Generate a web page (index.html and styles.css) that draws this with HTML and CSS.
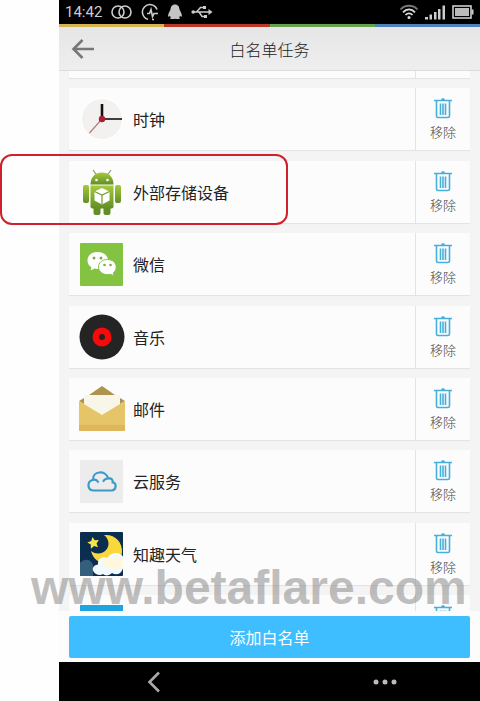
FILE: index.html
```
<!DOCTYPE html>
<html lang="zh-CN">
<head>
    <meta charset="UTF-8">
    <meta name="viewport" content="width=device-width, initial-scale=1.0">
    <title>白名单任务</title>
    <link rel="stylesheet" href="styles.css">
</head>
<body>
    <svg class="sprite" aria-hidden="true">
        <symbol id="trash" viewBox="0 0 20 22">
            <path d="M1 3.500h18M3.500 3.500v15.500q0 1.500 1.500 1.500h10q1.500 0 1.500-1.500V3.500M7.500 6.500v11.500M10 6.500v11.500M12.500 6.500v11.500" fill="none" stroke="#46b0da" stroke-width="1.600"/>
            <path d="M8 3.500q0-2.500 2-2.500t2 2.500z" fill="#46b0da"/>
        </symbol>
    </svg>

    <div class="phone">
        <!-- Status bar -->
        <div class="status-bar">
            <span class="time">14:42</span>
            <svg width="21" height="16" viewBox="0 0 21 16" fill="none" stroke="#ccc" stroke-width="1.600">
                <circle cx="7" cy="8" r="6"/><circle cx="14" cy="8" r="6"/>
            </svg>
            <svg width="18" height="18" viewBox="0 0 18 18" fill="none" stroke="#ccc" stroke-width="1.600">
                <path d="M7 16.300A7.500 7.500 0 1 1 16 6.500M6 10.500h2.500l1.500-4 1.500 7 1.500-3H17M11 16.500h2"/>
            </svg>
            <svg width="14" height="16" viewBox="0 0 14 16" fill="#c4c4c4">
                <path d="M7 .5C4 .5 2.500 3 2.500 5.500L1 8.500C-.3 11 0 13 .8 12.800L2 12l.8 1.500L2 15h4.500L7 14.500l.5.500H12l-.8-1.500L12 12l1.200.8c.8.200 1.100-1.800-.2-4.300L11.500 5.500C11.500 3 10 .5 7 .5z"/>
            </svg>
            <svg width="22" height="14" viewBox="0 0 22 14" fill="none" stroke="#ccc" stroke-width="1.500">
                <path d="M3 7h15M5.500 7l4-4.500h3M8 7l3 4.500h3"/>
                <circle cx="2.200" cy="7" r="1.800" fill="#ccc" stroke="none"/>
                <path d="M17.500 4v6L21.500 7z" fill="#ccc" stroke="none"/>
                <path d="M12 1h3v3h-3zM13 10h3v3h-3z" fill="#ccc" stroke="none"/>
            </svg>
            <div class="status-right">
                <svg width="20" height="16" viewBox="0 0 20 16" fill="none" stroke="#ddd" stroke-width="1.800">
                    <path d="M1.500 5.500C6 .5 14 .5 18.500 5.500" stroke="#777"/>
                    <path d="M4 8.300c3.500-3.800 8.500-3.800 12 0M6.500 11c2-2.200 5-2.200 7 0"/>
                    <circle cx="10" cy="13.500" r="1.500" fill="#ddd" stroke="none"/>
                </svg>
                <svg width="21" height="15" viewBox="0 0 21 15" fill="#ccc">
                    <path d="M0 12h3v2.500H0zM4.500 9.500h2.500v5H4.500zM9 7h2.500v7.500H9zM13 4h2.500v10.500H13zM17.500.5H20v14h-2.500z"/>
                </svg>
                <svg width="22" height="14" viewBox="0 0 22 14">
                    <rect x="1" y="1" width="18" height="12" fill="none" stroke="#ccc" stroke-width="1.600"/>
                    <path d="M3 3h14v8H3z" fill="#bbb"/><path d="M19.500 4.500h2v5h-2z" fill="#ccc"/>
                </svg>
            </div>
        </div>
        <div class="color-strip">
            <span class="yellow"></span><span class="red"></span><span class="green"></span><span class="blue"></span>
        </div>

        <!-- Header -->
        <header class="header">
            <button class="back" aria-label="返回">
                <svg width="24" height="22" viewBox="0 0 24 22" fill="none" stroke="#777" stroke-width="2.600">
                    <path d="M11.500 2L2.500 11l9 9M2.500 11H23"/>
                </svg>
            </button>
            <h1>白名单任务</h1>
        </header>

        <!-- Task list -->
        <main class="list-area">
            <ul class="task-list">
                <li class="task"><span class="task-info"></span><span class="remove"></span></li>
                <li class="task">
                    <div class="task-info">
                        <svg class="icon" viewBox="0 0 46 46">
                            <circle cx="23" cy="23" r="21" fill="#fff"/>
                            <circle cx="23" cy="23" r="20" fill="#f3f0f0"/>
                            <path d="M23 23L10.500 37" stroke="#b9797c" stroke-width="1.200"/>
                            <path d="M23 23V8" stroke="#111" stroke-width="2.600"/>
                            <path d="M23 23h20" stroke="#111" stroke-width="1.600"/>
                            <circle cx="23" cy="23" r="3.200" fill="#a91f31"/>
                        </svg>
                        <span>时钟</span>
                    </div>
                    <button class="remove"><svg><use href="#trash"/></svg>移除</button>
                </li>
                <li class="task">
                    <div class="task-info">
                        <svg class="icon" viewBox="0 0 46 46">
                            <defs>
                                <linearGradient id="droid" x2="0" y2="1"><stop stop-color="#a5ca3c"/><stop offset="1" stop-color="#628f24"/></linearGradient>
                            </defs>
                            <path d="M14 1l3.500 5M32 1l-3.500 5" stroke="#8a9d60" stroke-width="1.200"/>
                            <path d="M11.500 15.500C11.500 8 16 3.500 23 3.500S34.500 8 34.500 15.500z" fill="url(#droid)"/>
                            <circle cx="17.500" cy="11" r="1.300" fill="#fff"/><circle cx="28.500" cy="11" r="1.300" fill="#fff"/>
                            <rect x="4" y="16" width="6" height="18" rx="2" fill="url(#droid)"/>
                            <rect x="36" y="16" width="6" height="18" rx="2" fill="url(#droid)"/>
                            <rect x="14.500" y="33" width="7" height="13" rx="2" fill="#628f24"/>
                            <rect x="24.500" y="33" width="7" height="13" rx="2" fill="#628f24"/>
                            <path d="M11.500 16.500h23v21q0 2-2 2h-19q-2 0-2-2z" fill="url(#droid)"/>
                            <path d="M23 19l7.500 3.500v9L23 35.500l-7.500-4v-9z" fill="#fff"/>
                            <path d="M15.500 22.500L23 26l7.500-3.500M23 26v9.500" fill="none" stroke="#719b36" stroke-width="1.200"/>
                        </svg>
                        <span>外部存储设备</span>
                    </div>
                    <button class="remove"><svg><use href="#trash"/></svg>移除</button>
                </li>
                <li class="task">
                    <div class="task-info">
                        <svg class="icon" viewBox="0 0 46 46">
                            <rect x="1" y="2" width="43" height="43" rx="1" fill="#83c341"/>
                            <path d="M18.500 11C12.500 11 8.500 14.500 8.500 19.500c0 3 1.500 5.300 4 7l-1 3 4-2c6 1.500 13-1.500 13.500-8C29 14.500 24.500 11 18.500 11z" fill="#fff"/>
                            <path d="M28.500 18.500c-5.500 0-9 3.300-9 7.500 0 5.500 6 8.800 12 7.200l3.500 1.800-.8-3c2-1.500 3-3.500 3-6 0-4.200-3.500-7.500-8.700-7.500z" fill="#fff" stroke="#83c341" stroke-width="1"/>
                            <g fill="#83a94d"><circle cx="15" cy="17" r="1.500"/><circle cx="22" cy="17" r="1.500"/><circle cx="25.500" cy="24" r="1.300"/><circle cx="31.500" cy="24" r="1.300"/></g>
                        </svg>
                        <span>微信</span>
                    </div>
                    <button class="remove"><svg><use href="#trash"/></svg>移除</button>
                </li>
                <li class="task">
                    <div class="task-info">
                        <svg class="icon" viewBox="0 0 46 46">
                            <circle cx="23" cy="23" r="22.500" fill="#242424"/>
                            <circle cx="23" cy="23" r="9.500" fill="#f80a0a"/>
                            <circle cx="23" cy="23" r="3" fill="#242424"/>
                        </svg>
                        <span>音乐</span>
                    </div>
                    <button class="remove"><svg><use href="#trash"/></svg>移除</button>
                </li>
                <li class="task">
                    <div class="task-info">
                        <svg class="icon" viewBox="0 0 46 46">
                            <path d="M10 9L23 0l13 9zM0 15l5-3v6zM46 15l-5-3v6z" fill="#ad934d"/>
                            <path d="M5 9h36v20H5z" fill="#f8f6e9"/>
                            <path d="M0 15l23 14 23-14v29q0 1-1 1H1q-1 0-1-1z" fill="#e6c468"/>
                            <path d="M0 39h46v5q0 1-1 1H1q-1 0-1-1z" fill="#dfb65a"/>
                        </svg>
                        <span>邮件</span>
                    </div>
                    <button class="remove"><svg><use href="#trash"/></svg>移除</button>
                </li>
                <li class="task">
                    <div class="task-info">
                        <svg class="icon" viewBox="0 0 46 46">
                            <rect x="1" y="2" width="43" height="43" fill="#ececec"/>
                            <path d="M15 32.500C8 32.500 7.500 23 14 21.800C13.500 13 26.500 11.500 29.300 20.500C33 20 34 22.500 33.700 24.300C38 24.500 37.500 32.500 32.500 32.500zM14 21.800c2.500-.5 4.200.5 5 2M24.500 23c.8-1.600 2.500-2.500 4.800-2.500" fill="none" stroke="#3b9acb" stroke-width="2.200" stroke-linecap="round"/>
                        </svg>
                        <span>云服务</span>
                    </div>
                    <button class="remove"><svg><use href="#trash"/></svg>移除</button>
                </li>
                <li class="task">
                    <div class="task-info">
                        <svg class="icon" viewBox="0 0 46 46">
                            <rect x="1" y="1" width="43" height="44" rx="1" fill="#0b2d50"/>
                            <path d="M25 4c11-1 18.500 7 18 17C42.500 29 36 34 28 33c-8-.5-14-5-16-13 5 4 12 3 15.500-1.500C31 14 30 8 25 4z" fill="#f9d83c"/>
                            <path d="M13.500 6l2.300 3.300 4-.3-2.300 3.400 1.500 3.800-3.900-1.100-3.200 2.600-.1-4.100-3.500-2.200 3.900-1.300z" fill="#f4e34c"/>
                            <path d="M1 32c4-5 11-4 13 2v11H1z" fill="#335f7d"/>
                            <path d="M17 43c-5-3-4-9 2-9.500-.5-6 5-8.500 9.500-6.500 3-6 12-6.500 15.500-1.500v12c-2 6-7 7-11 4.500-3 3-7 3-9 1-2 1.500-5 1-7 0z" fill="#f3faff"/>
                            <path d="M24 33c-.5-6 6-8 10-4.500 2-3 7-4 10-1V37c-7 2-14 1-20-4z" fill="#fff8dc"/>
                        </svg>
                        <span>知趣天气</span>
                    </div>
                    <button class="remove"><svg><use href="#trash"/></svg>移除</button>
                </li>
                <li class="task">
                    <div class="task-info">
                        <svg class="icon" viewBox="0 0 46 46"><rect x="1" y="2" width="43" height="43" fill="#1ea4df"/></svg>
                    </div>
                    <button class="remove last" aria-label="移除"><svg><use href="#trash"/></svg></button>
                </li>
            </ul>
        </main>

        <div class="footer">
            <button class="add">添加白名单</button>
        </div>

        <nav class="nav-bar">
            <button aria-label="返回">
                <svg width="14" height="22" viewBox="0 0 14 22"><path d="M12 1.500L2.500 11l9.500 9.500" fill="none" stroke="#aaa" stroke-width="2.600"/></svg>
            </button>
            <button aria-label="更多">
                <svg width="24" height="6" viewBox="0 0 24 6" fill="#bbb"><circle cx="3" cy="3" r="2.500"/><circle cx="12" cy="3" r="2.500"/><circle cx="21" cy="3" r="2.500"/></svg>
            </button>
        </nav>
    </div>

    <!-- Annotations over the page -->
    <div class="highlight"></div>
    <div class="watermark">www.betaflare.com</div>
</body>
</html>
```

FILE: styles.css
```
* {
    box-sizing: border-box;
}

body {
    position: relative;
    margin: 0;
    padding-left: 59px;
    background: #fefefe;
    font-family: "Noto Sans CJK SC", sans-serif;
    font-size: 16px;
    color: #222;
}

button {
    padding: 0;
    border: none;
    background: none;
    font: inherit;
    cursor: pointer;
}

svg {
    display: block;
    flex-shrink: 0;
}

.sprite {
    position: absolute;
    width: 0;
    height: 0;
}

.phone {
    display: flex;
    flex-direction: column;
    height: 100vh;
    background: #f4f4f4;
}

/* Status bar */
.status-bar {
    display: flex;
    align-items: center;
    gap: 9px;
    height: 24px;
    padding: 0 6px;
    background: #000;
}

.time {
    font-family: Roboto, sans-serif;
    font-size: 15px;
    color: #ccc;
}

.status-right {
    display: flex;
    align-items: center;
    gap: 6px;
    margin-left: auto;
}

.color-strip {
    display: flex;
    height: 3px;
}

.color-strip span {
    flex: 1;
}

.yellow { background: #d3b451; }
.red { background: #b83a26; }
.green { background: #64a34c; }
.blue { background: #4c83bd; }

/* Header */
.header {
    display: grid;
    grid-template-columns: 48px 1fr 48px;
    align-items: center;
    height: 44px;
    border-bottom: 1px solid #dcdcdc;
    background: linear-gradient(#e6e6e6, #eee);
}

.back {
    justify-self: center;
}

.header h1 {
    margin: 0;
    font-size: 16px;
    font-weight: 300;
    line-height: 20px;
    text-align: center;
    color: #222;
}

/* List, scrolled so that the first and last cards are cut off */
.list-area {
    display: flex;
    flex: 1;
    flex-direction: column;
    min-height: 0;
    overflow: hidden;
}

.task-list {
    display: flex;
    flex: 1;
    flex-direction: column;
    justify-content: space-between;
    margin: -55px 0 -46px;
    padding: 0 10px;
    list-style: none;
}

.task {
    display: flex;
    height: 62px;
    background: #fcfcfc;
    box-shadow: 0 1px 1px #e4e4e4;
}

.task-info {
    display: flex;
    flex: 1;
    align-items: center;
    gap: 8px;
    padding-left: 10px;
}

.icon {
    width: 46px;
    height: 46px;
}

.remove {
    display: flex;
    flex-direction: column;
    align-items: center;
    justify-content: center;
    gap: 4px;
    width: 55px;
    border-left: 1px solid #e4e4e4;
    font-size: 13px;
    font-weight: 300;
    line-height: 18px;
    color: #444;
}

.remove svg {
    width: 20px;
    height: 22px;
}

.remove.last {
    justify-content: flex-start;
    padding-top: 9px;
}

/* Bottom */
.footer {
    padding: 5px 10px 4px;
    background: #fcfcfc;
}

.add {
    display: block;
    width: 100%;
    height: 42px;
    border-radius: 2px;
    background: #3ebdff;
    line-height: 20px;
    color: #fff;
}

.nav-bar {
    display: flex;
    justify-content: space-between;
    height: 39px;
    padding: 0 80px;
    background: #000;
}

.nav-bar button {
    display: flex;
    align-items: center;
    justify-content: center;
    width: 30px;
}

.highlight {
    position: absolute;
    top: 154px;
    left: 0;
    width: 288px;
    height: 71px;
    border: 2px solid #d0202c;
    border-radius: 12px;
    pointer-events: none;
}

.watermark {
    position: absolute;
    top: 560px;
    left: 31px;
    font: bold 48px/56px "Liberation Sans", sans-serif;
    color: rgba(128, 128, 128, 0.5);
    pointer-events: none;
}
```
